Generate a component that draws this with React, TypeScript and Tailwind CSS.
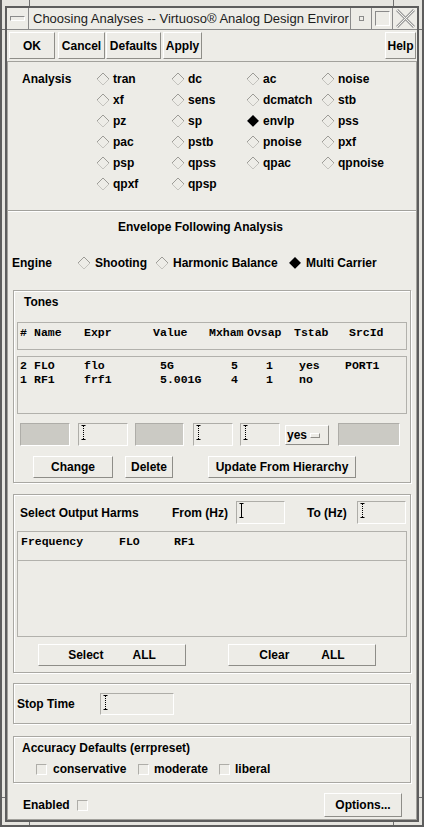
import React from "react";

const analyses: string[][] = [
  ["tran", "dc", "ac", "noise"],
  ["xf", "sens", "dcmatch", "stb"],
  ["pz", "sp", "envlp", "pss"],
  ["pac", "pstb", "pnoise", "pxf"],
  ["psp", "qpss", "qpac", "qpnoise"],
  ["qpxf", "qpsp"],
];

const raised =
  "border border-t-white border-l-white border-b-[#8e8d88] border-r-[#8e8d88] bg-[#edece7]";
const sunken = "border border-[#aeada8] border-b-white border-r-white";
const etched = "border border-[#a9a8a3] shadow-[inset_1px_1px_0_#ffffff,1px_1px_0_#ffffff]";

function Diamond({ on }: { on?: boolean }) {
  return (
    <svg width="14" height="14" viewBox="0 0 14 14" className="shrink-0">
      <polygon points="7,1 13,7 7,13 1,7" fill={on ? "#000000" : "#edece7"} />
      <polyline points="1,7 7,1 13,7" fill="none" stroke={on ? "#6f6f6f" : "#9c9b96"} strokeWidth="1" />
      <polyline points="1,7 7,13 13,7" fill="none" stroke={on ? "#9a9a9a" : "#c4c3be"} strokeWidth="1" />
    </svg>
  );
}

function Cursor({ solid }: { solid?: boolean }) {
  return (
    <svg width="5" height="15" viewBox="0 0 5 15" className="shrink-0">
      <line x1="0.5" y1="0.5" x2="4.5" y2="0.5" stroke="#000" />
      <line x1="0.5" y1="14.5" x2="4.5" y2="14.5" stroke="#000" />
      <line
        x1="2.5"
        y1="1"
        x2="2.5"
        y2="14"
        stroke="#000"
        strokeDasharray={solid ? undefined : "1 1"}
      />
    </svg>
  );
}

function Field({ className, gray, cursor, solid }: { className: string; gray?: boolean; cursor?: boolean; solid?: boolean }) {
  return (
    <div className={`${sunken} ${gray ? "bg-[#cbcac4]" : "bg-[#edece7]"} flex items-start pl-[2px] pt-[1px] ${className}`}>
      {cursor && <Cursor solid={solid} />}
    </div>
  );
}

function Check() {
  return <div className={`h-[11px] w-[11px] shrink-0 ${sunken} bg-[#edece7]`} />;
}

export default function App() {
  return (
    <div className="relative h-[827px] w-[424px] overflow-hidden border-x-2 border-b-2 border-[#5d5d5d] bg-[#e6e5e0] px-[3px] pt-[6px] pb-[3px] font-['Liberation_Sans',Arial,sans-serif] text-black">
      {/* frame resize marks */}
      <div className="absolute left-[27px] top-0 h-[6px] w-px bg-[#707070]" />
      <div className="absolute left-[391px] top-0 h-[6px] w-px bg-[#707070]" />
      <div className="absolute left-[27px] bottom-0 h-[3px] w-px bg-[#707070]" />
      <div className="absolute left-[391px] bottom-0 h-[3px] w-px bg-[#707070]" />
      <div className="absolute left-0 top-[29px] h-px w-[3px] bg-[#707070]" />
      <div className="absolute right-0 top-[29px] h-px w-[3px] bg-[#707070]" />
      <div className="absolute left-0 top-[797px] h-px w-[3px] bg-[#707070]" />
      <div className="absolute right-0 top-[797px] h-px w-[3px] bg-[#707070]" />

      <div className="flex h-full flex-col border-2 border-[#5d5d5d] bg-[#edece7]">
        {/* Title bar */}
        <div className="flex h-[22px] shrink-0 border-b border-[#8a8a8a] bg-[#edece7]">
          <div className="flex w-[22px] shrink-0 items-center justify-center border-r border-[#8a8a8a]">
            <div className="h-[5px] w-[15px] border border-[#8a8a8a] border-b-white border-r-white" />
          </div>
          <div className="min-w-0 flex-1 whitespace-nowrap pl-[4px] text-[13px] leading-[21px] text-[#1c1c1c]">
            Choosing Analyses -- Virtuoso® Analog Design Enviror
          </div>
          <div className="flex w-[21px] shrink-0 items-center justify-center border-l border-[#8a8a8a]">
            <div className="h-[5px] w-[5px] border border-[#8a8a8a]" />
          </div>
          <div className="flex w-[21px] shrink-0 items-center justify-center border-l border-[#8a8a8a]">
            <div className="h-[15px] w-[15px] border border-[#8a8a8a] border-b-white border-r-white" />
          </div>
          <div className="flex w-[25px] shrink-0 items-center justify-center border-l border-[#8a8a8a]">
            <svg width="19" height="19" viewBox="0 0 19 19">
              <path d="M1 1 L18 18 M18 1 L1 18" stroke="#9d9d9d" strokeWidth="3" />
              <path d="M1 1 L18 18 M18 1 L1 18" stroke="#f4f4f0" strokeWidth="1" />
            </svg>
          </div>
        </div>

        {/* Button bar */}
        <div className="flex h-[31px] shrink-0 items-start pl-[2px] pr-[1px] pt-[2px] text-[12px] font-bold">
          <button type="button" className={`${raised} h-[27px] w-[46px]`}>OK</button>
          <button type="button" className={`${raised} ml-[3px] h-[27px] w-[47px]`}>Cancel</button>
          <button type="button" className={`${raised} ml-[1px] h-[27px] w-[55px]`}>Defaults</button>
          <button type="button" className={`${raised} ml-[2px] h-[27px] w-[39px]`}>Apply</button>
          <button type="button" className={`${raised} ml-auto h-[27px] w-[31px]`}>Help</button>
        </div>

        {/* Content */}
        <div className="flex flex-1 flex-col border border-[#a2a19c] text-[12px] font-bold">
          {/* Analysis */}
          <div className="flex pl-[14px] pt-[6px] pb-[16px]">
            <div className="flex h-[21px] w-[74px] items-center">Analysis</div>
            <div className="grid grid-cols-[75px_75px_75px_75px] auto-rows-[21px]">
              {analyses.flatMap((row, r) =>
                row.map((a) => (
                  <div key={`${r}-${a}`} className="flex items-center gap-[3px]">
                    <Diamond on={a === "envlp"} />
                    <span>{a}</span>
                  </div>
                ))
              )}
            </div>
          </div>
          <div className="border-t border-[#a2a19c] border-b border-b-white" />

          {/* Envelope */}
          <div className="mt-[8px] pl-[110px] leading-[14px]">Envelope Following Analysis</div>

          <div className="mt-[21px] flex h-[16px] items-center pl-[4px]">
            <div className="w-[65px]">Engine</div>
            <div className="flex w-[78px] items-center gap-[4px]">
              <Diamond />
              <span>Shooting</span>
            </div>
            <div className="flex w-[133px] items-center gap-[4px]">
              <Diamond />
              <span>Harmonic Balance</span>
            </div>
            <div className="flex items-center gap-[4px]">
              <Diamond on />
              <span>Multi Carrier</span>
            </div>
          </div>

          {/* Tones */}
          <div className={`mx-[5px] mt-[19px] pt-[4px] pb-[4px] ${etched}`}>
            <div className="pl-[10px] leading-[14px]">Tones</div>
            <div className="mx-[3px] mt-[13px] h-[28px] border border-[#b2b1ac] pl-[2px] pt-[3px] font-['Liberation_Mono',monospace] text-[11.5px] leading-[14px]">
              <div className="flex whitespace-nowrap">
                <span className="w-[14px]">#</span>
                <span className="w-[50px]">Name</span>
                <span className="w-[69px]">Expr</span>
                <span className="w-[56px]">Value</span>
                <span className="w-[38px]">Mxham</span>
                <span className="w-[47px]">Ovsap</span>
                <span className="w-[55px]">Tstab</span>
                <span>SrcId</span>
              </div>
            </div>
            <div className="mx-[3px] mt-[6px] h-[58px] border border-[#b2b1ac] pl-[2px] pt-[2px] font-['Liberation_Mono',monospace] text-[11.5px] leading-[14px]">
              <div className="flex whitespace-nowrap">
                <span className="w-[14px]">2</span>
                <span className="w-[50px]">FLO</span>
                <span className="w-[76px]">flo</span>
                <span className="w-[71px]">5G</span>
                <span className="w-[35px]">5</span>
                <span className="w-[33px]">1</span>
                <span className="w-[46px]">yes</span>
                <span>PORT1</span>
              </div>
              <div className="flex whitespace-nowrap">
                <span className="w-[14px]">1</span>
                <span className="w-[50px]">RF1</span>
                <span className="w-[76px]">frf1</span>
                <span className="w-[71px]">5.001G</span>
                <span className="w-[35px]">4</span>
                <span className="w-[33px]">1</span>
                <span className="w-[46px]">no</span>
                <span></span>
              </div>
            </div>

            <div className="mt-[9px] flex h-[23px]">
              <Field gray className="ml-[6px] w-[50px]" />
              <Field cursor className="ml-[8px] w-[50px]" />
              <Field gray className="ml-[7px] w-[49px]" />
              <Field cursor className="ml-[9px] w-[40px]" />
              <Field cursor className="ml-[7px] w-[40px]" />
              <div className={`${raised} ml-[5px] mt-[2px] flex h-[20px] w-[44px] items-center pl-[1px]`}>
                <span>yes</span>
                <div className={`${raised} ml-[3px] h-[5px] w-[10px]`} />
              </div>
              <Field gray className="ml-[9px] w-[62px]" />
            </div>

            <div className="mt-[10px] flex h-[22px]">
              <button type="button" className={`${raised} ml-[19px] w-[80px]`}>Change</button>
              <button type="button" className={`${raised} ml-[12px] w-[48px]`}>Delete</button>
              <button type="button" className={`${raised} ml-[35px] w-[148px]`}>Update From Hierarchy</button>
            </div>
          </div>

          {/* Output harms */}
          <div className={`mx-[5px] mt-[11px] pt-[6px] pb-[6px] ${etched}`}>
            <div className="flex h-[23px] items-center">
              <div className="ml-[6px] w-[152px]">Select Output Harms</div>
              <div className="w-[64px]">From (Hz)</div>
              <Field cursor solid className="h-[23px] w-[49px]" />
              <div className="ml-[22px] w-[50px]">To (Hz)</div>
              <Field cursor className="h-[23px] w-[49px]" />
            </div>
            <div className="mx-[3px] mt-[7px] h-[30px] border border-[#b2b1ac] pl-[3px] pt-[3px] font-['Liberation_Mono',monospace] text-[11.5px] leading-[14px]">
              <div className="flex whitespace-nowrap">
                <span className="w-[98px]">Frequency</span>
                <span className="w-[55px]">FLO</span>
                <span>RF1</span>
              </div>
            </div>
            <div className="mx-[3px] h-[76px] border-x border-b border-[#b2b1ac]" />
            <div className="mt-[7px] flex h-[22px]">
              <button type="button" className={`${raised} ml-[24px] flex w-[148px] items-center justify-center gap-[29px]`}>
                <span>Select</span>
                <span>ALL</span>
              </button>
              <button type="button" className={`${raised} ml-[42px] flex w-[148px] items-center justify-center gap-[32px]`}>
                <span>Clear</span>
                <span>ALL</span>
              </button>
            </div>
          </div>

          {/* Stop time */}
          <div className={`mx-[5px] mt-[10px] flex h-[41px] items-center ${etched}`}>
            <div className="ml-[3px] w-[83px]">Stop Time</div>
            <Field cursor className="h-[22px] w-[74px]" />
          </div>

          {/* Accuracy */}
          <div className={`mx-[5px] mt-[12px] h-[47px] pt-[4px] ${etched}`}>
            <div className="pl-[8px] leading-[14px]">Accuracy Defaults (errpreset)</div>
            <div className="mt-[7px] flex h-[14px] items-center pl-[22px]">
              <div className="flex w-[102px] items-center gap-[6px]">
                <Check />
                <span>conservative</span>
              </div>
              <div className="flex w-[81px] items-center gap-[5px]">
                <Check />
                <span>moderate</span>
              </div>
              <div className="flex items-center gap-[5px]">
                <Check />
                <span>liberal</span>
              </div>
            </div>
          </div>

          {/* Bottom */}
          <div className="mt-[10px] flex h-[24px] items-center">
            <div className="ml-[15px] w-[54px]">Enabled</div>
            <Check />
            <button type="button" className={`${raised} ml-auto mr-[14px] h-[24px] w-[78px]`}>Options...</button>
          </div>
        </div>
      </div>
    </div>
  );
}
